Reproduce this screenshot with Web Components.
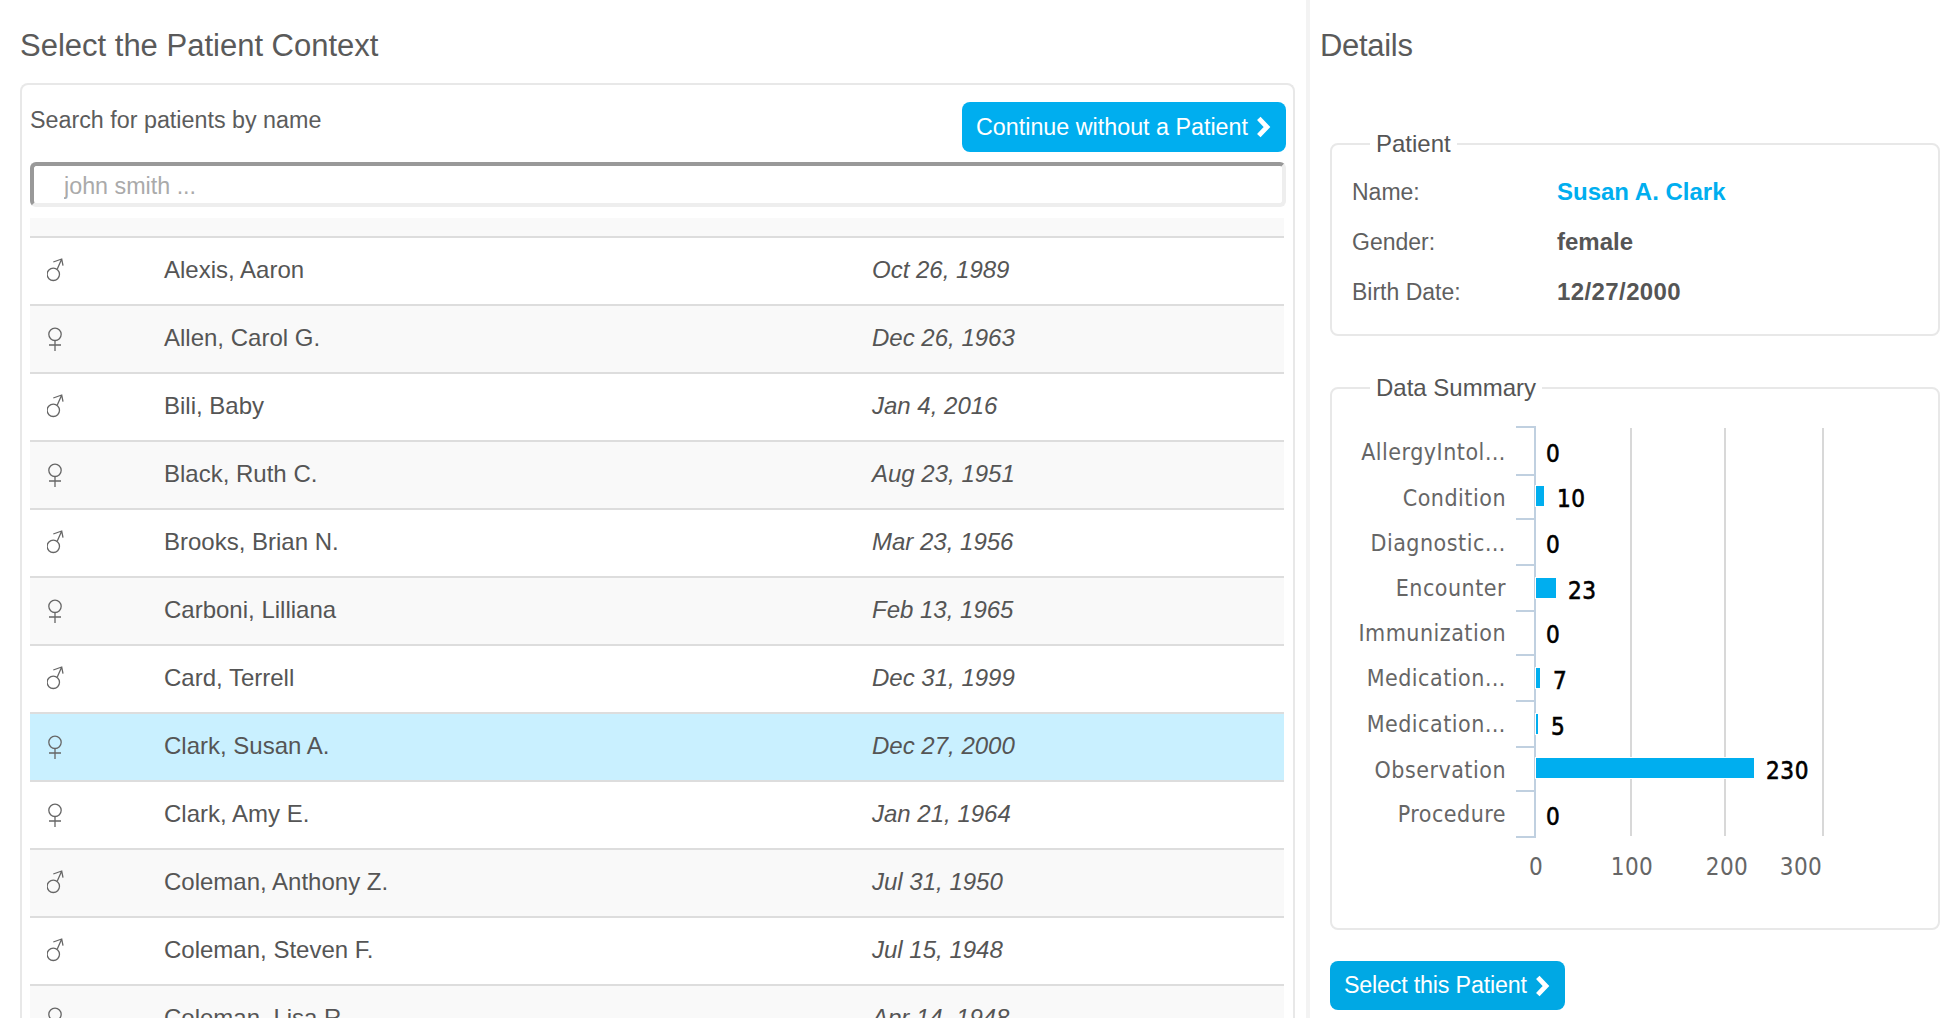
<!DOCTYPE html>
<html>
<head>
<meta charset="utf-8">
<title>Select the Patient Context</title>
<style>
html,body{margin:0;padding:0;height:1018px;overflow:hidden;background:#fff}
body{font-family:"Liberation Sans",Arial,sans-serif;color:#555}
</style>
</head>
<body>
<context-page>
  <page-heading slot="left-title">Select the Patient Context</page-heading>
  <patient-picker slot="left">
    <span slot="search-label">Search for patients by name</span>
    <blue-button slot="action">Continue without a Patient</blue-button>
    <patient-row gender="m" dob="Oct 26, 1989">Alexis, Aaron</patient-row>
    <patient-row gender="f" dob="Dec 26, 1963">Allen, Carol G.</patient-row>
    <patient-row gender="m" dob="Jan 4, 2016">Bili, Baby</patient-row>
    <patient-row gender="f" dob="Aug 23, 1951">Black, Ruth C.</patient-row>
    <patient-row gender="m" dob="Mar 23, 1956">Brooks, Brian N.</patient-row>
    <patient-row gender="f" dob="Feb 13, 1965">Carboni, Lilliana</patient-row>
    <patient-row gender="m" dob="Dec 31, 1999">Card, Terrell</patient-row>
    <patient-row gender="f" dob="Dec 27, 2000" selected>Clark, Susan A.</patient-row>
    <patient-row gender="f" dob="Jan 21, 1964">Clark, Amy E.</patient-row>
    <patient-row gender="m" dob="Jul 31, 1950">Coleman, Anthony Z.</patient-row>
    <patient-row gender="m" dob="Jul 15, 1948">Coleman, Steven F.</patient-row>
    <patient-row gender="f" dob="Apr 14, 1948">Coleman, Lisa R.</patient-row>
  </patient-picker>
  <page-heading slot="right-title">Details</page-heading>
  <patient-details slot="right"></patient-details>
  <summary-box slot="right"></summary-box>
  <blue-button slot="right" dark>Select this Patient</blue-button>
</context-page>

<script>
class ContextPage extends HTMLElement {
  constructor() {
    super();
    this.attachShadow({ mode: 'open' });
    this.shadowRoot.innerHTML = `
      <style>
:host{display:flex;width:1956px;height:1018px;overflow:hidden}
.left{width:1310px;box-sizing:border-box;padding:0 11px 0 20px;border-right:4px solid #f3f3f3;flex:none}
.right{width:646px;flex:none;padding:0 16px 0 10px;box-sizing:border-box}
      </style>
      <div class="left"><slot name="left-title"></slot><slot name="left"></slot></div>
      <div class="right"><slot name="right-title"></slot><slot name="right"></slot></div>
    `;
  }
}

class PageHeading extends HTMLElement {
  constructor() {
    super();
    this.attachShadow({ mode: 'open' });
    this.shadowRoot.innerHTML = `
      <style>
:host{display:block;font-size:31px;line-height:42px;padding-top:25px;margin-bottom:16px;color:#5a5a5a}
:host([slot="right-title"]){margin-bottom:63px;letter-spacing:-.3px}
      </style>
      <slot></slot>
    `;
  }
}

class BlueButton extends HTMLElement {
  constructor() {
    super();
    this.attachShadow({ mode: 'open' });
    this.shadowRoot.innerHTML = `
      <style>
:host{display:inline-flex;align-items:center;height:50px;box-sizing:border-box;padding:0 16px 0 14px;gap:8px;
  background:#00aeef;color:#fff;border-radius:8px;font-size:23.3px;white-space:nowrap;cursor:pointer}
:host([dark]){background:#00a8e4;height:49px;margin:31px 0 0 10px;letter-spacing:-.2px}
svg{display:block;flex:none;overflow:visible}
      </style>
      <slot></slot>
      <svg width="14" height="22" viewBox="0 0 14 22"><path d="M2.800 2.400 11 11 2.800 19.600" fill="none" stroke="#fff" stroke-width="4.800"/></svg>
    `;
  }
}

class PatientPicker extends HTMLElement {
  constructor() {
    super();
    this.attachShadow({ mode: 'open' });
    this.shadowRoot.innerHTML = `
      <style>
:host{display:block;border:2px solid #e8e8e8;border-bottom:0;border-radius:8px 8px 0 0;padding:17px 7px 0 8px;font-size:23.3px;color:#5c5c5c}
.top{display:flex;justify-content:space-between;align-items:flex-start;line-height:36px}
input{display:block;width:100%;height:45px;box-sizing:border-box;margin:10px 0 11px;padding:3px 0 0 30px;
  border-style:solid;border-width:4px;border-color:#999 #eee #eee #999;border-radius:6px;outline:0;
  font:23.3px "Liberation Sans",Arial,sans-serif;color:#555;background:#fff}
input::placeholder{color:#aaa;opacity:1}
.list{margin-right:2px}
.head{height:18px;background:#f9f9f9;border-bottom:2px solid #ddd}
      </style>
      <div class="top"><slot name="search-label"></slot><slot name="action"></slot></div>
      <input type="text" placeholder="john smith ...">
      <div class="list"><div class="head"></div><slot></slot></div>
    `;
  }
}

const MALE_ICON = '<circle cx="6.300" cy="16.300" r="6.200"/><path d="M10.300 11 14.700 1M6.300 4 14.700 1 16 7.700"/>';
const FEMALE_ICON = '<circle cx="8" cy="8.300" r="6.200"/><path d="M8 14.500V25M2 19H14"/>';

class PatientRow extends HTMLElement {
  constructor() {
    super();
    this.attachShadow({ mode: 'open' });
    const icon = this.getAttribute('gender') === 'f' ? FEMALE_ICON : MALE_ICON;
    this.shadowRoot.innerHTML = `
      <style>
:host{display:grid;grid-template-columns:134px 708px 1fr;align-items:center;height:66px;border-bottom:2px solid #ddd;background:#fff;font-size:24px;color:#555}
:host(:nth-of-type(even)){background:#f9f9f9}
:host([selected]){background:#c9f0ff}
.icon{padding-left:17px}
.text{padding-bottom:2px}
svg{display:block;fill:none;stroke:#666;stroke-width:1.300}
.dob{font-style:italic}
      </style>
      <div class="icon"><svg width="20" height="26" viewBox="0 0 20 26">${icon}</svg></div>
      <div class="text"><slot></slot></div>
      <div class="text dob">${this.getAttribute('dob')}</div>
    `;
  }
}

class PatientDetails extends HTMLElement {
  constructor() {
    super();
    this.attachShadow({ mode: 'open' });
    this.shadowRoot.innerHTML = `
      <style>
:host{display:block;margin-left:10px;font-size:24px;color:#555}
fieldset{margin:0;border:2px solid #e8e8e8;border-radius:8px;padding:9px 20px 17px 20px}
legend{margin-left:18px;padding:0 6px;line-height:28px;font-size:24px}
.row{display:grid;grid-template-columns:205px 1fr;align-items:center;height:50px}
.label{font-size:23px;color:#5f5f5f}
.value{font-weight:700}
.name{color:#00aeef}
.date{letter-spacing:.4px}
      </style>
      <fieldset>
        <legend>Patient</legend>
        <div class="row"><div class="label">Name:</div><div class="value name">Susan A. Clark</div></div>
        <div class="row"><div class="label">Gender:</div><div class="value">female</div></div>
        <div class="row"><div class="label">Birth Date:</div><div class="value date">12/27/2000</div></div>
      </fieldset>
    `;
  }
}

class SummaryBox extends HTMLElement {
  constructor() {
    super();
    this.attachShadow({ mode: 'open' });
    const labels = [
      ['AllergyIntol…', 460], ['Condition', 506], ['Diagnostic…', 551], ['Encounter', 596], ['Immunization', 641],
      ['Medication…', 686], ['Medication…', 732], ['Observation', 778], ['Procedure', 822]
    ];
    const ticks = [427, 475, 519, 565, 611, 655, 701, 747, 791, 837];
    const values = [
      [0, 1546, 462, 0, 0], [10, 1557, 507, 486, 1544], [0, 1546, 553, 0, 0], [23, 1568, 599, 578, 1556],
      [0, 1546, 643, 0, 0], [7, 1553, 689, 668, 1540], [5, 1551, 735, 714, 1538], [230, 1766, 779, 758, 1754], [0, 1546, 825, 0, 0]
    ];
    const grid = [1631, 1725, 1823].map(x => `<path class="grid" d="M${x} 428V836"/>`).join('');
    const tickLines = ticks.map(y => `<path class="axis" d="M1516 ${y}H1536"/>`).join('');
    const labelText = labels.map(l => `<text class="cat" x="1506" y="${l[1]}" text-anchor="end">${l[0]}</text>`).join('');
    const bars = values.filter(v => v[4]).map(v => `<rect x="1536" y="${v[3]}" width="${v[4] - 1536}" height="20" fill="#00aeef" stroke="#fff" stroke-width="2" paint-order="stroke"/>`).join('');
    const valText = values.map(v => `<text class="val" x="${v[1]}" y="${v[2]}">${v[0]}</text>`).join('');
    this.shadowRoot.innerHTML = `
      <style>
:host{display:block;margin:38px 0 0 10px;font-size:24px;color:#555}
fieldset{margin:0;border:2px solid #e8e8e8;border-radius:8px;padding:0}
legend{margin-left:38px;padding:0 6px;line-height:28px;font-size:24px}
svg{display:block}
.grid{stroke:#d8d8d8;stroke-width:2;fill:none}
.axis{stroke:#c0d0e0;stroke-width:2;fill:none}
text{font-family:"DejaVu Sans Condensed","DejaVu Sans",sans-serif;font-stretch:condensed}
.cat{font-size:23px;letter-spacing:.5px;fill:#666}
.val{font-size:24px;letter-spacing:.6px;fill:#000;stroke:#000;stroke-width:.6}
.tick{font-size:24px;letter-spacing:.5px;fill:#666}
      </style>
      <fieldset>
        <legend>Data Summary</legend>
        <svg width="606" height="526" viewBox="1332 402 606 526">
          ${grid}
          ${tickLines}
          <path class="axis" d="M1535 426V838"/>
          ${bars}
          ${labelText}
          ${valText}
          <text class="tick" x="1536" y="875" text-anchor="middle">0</text>
          <text class="tick" x="1632" y="875" text-anchor="middle">100</text>
          <text class="tick" x="1727" y="875" text-anchor="middle">200</text>
          <text class="tick" x="1801" y="875" text-anchor="middle">300</text>
        </svg>
      </fieldset>
    `;
  }
}

customElements.define('context-page', ContextPage);
customElements.define('page-heading', PageHeading);
customElements.define('blue-button', BlueButton);
customElements.define('patient-picker', PatientPicker);
customElements.define('patient-row', PatientRow);
customElements.define('patient-details', PatientDetails);
customElements.define('summary-box', SummaryBox);
</script>
</body>
</html>
